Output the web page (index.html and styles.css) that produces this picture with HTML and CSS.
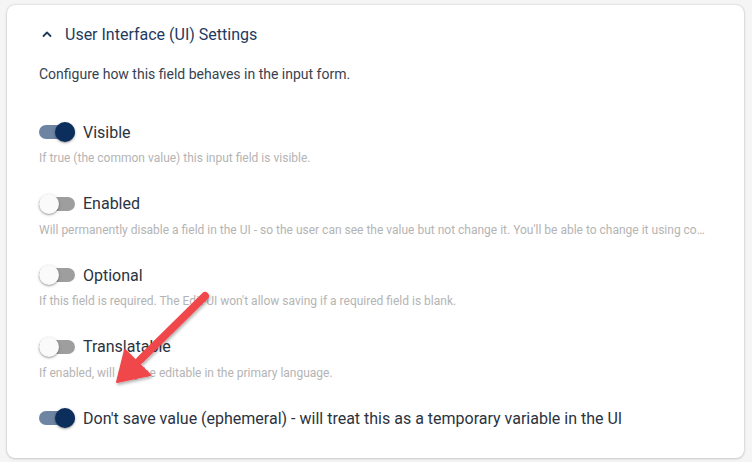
FILE: index.html
```html
<!DOCTYPE html>
<html>
<head>
<meta charset="utf-8">
<link rel="stylesheet" href="styles.css">
</head>
<body>
<div class="card">
  <div class="header">
    <svg class="chevron" width="12" height="12" viewBox="0 0 12 12"><path d="M2.5 8 L6 4.5 L9.5 8" fill="none" stroke="#1e3a5f" stroke-width="1.8" stroke-linecap="round" stroke-linejoin="round"/></svg>
    <span class="title">User Interface (UI) Settings</span>
  </div>
  <p class="intro">Configure how this field behaves in the input form.</p>
  <div class="items">
    <div class="item">
      <div class="row"><span class="toggle on"><span class="thumb"></span></span><span class="label">Visible</span></div>
      <div class="desc">If true (the common value) this input field is visible.</div>
    </div>
    <div class="item">
      <div class="row"><span class="toggle"><span class="thumb"></span></span><span class="label">Enabled</span></div>
      <div class="desc">Will permanently disable a field in the UI - so the user can see the value but not change it. You'll be able to change it using code and formulas.</div>
    </div>
    <div class="item">
      <div class="row"><span class="toggle"><span class="thumb"></span></span><span class="label">Optional</span></div>
      <div class="desc">If this field is required. The Edit-UI won't allow saving if a required field is blank.</div>
    </div>
    <div class="item">
      <div class="row"><span class="toggle"><span class="thumb"></span></span><span class="label">Translatable</span></div>
      <div class="desc">If enabled, will only be editable in the primary language.</div>
    </div>
    <div class="item">
      <div class="row"><span class="toggle on"><span class="thumb"></span></span><span class="label">Don't save value (ephemeral) - will treat this as a temporary variable in the UI</span></div>
    </div>
  </div>
</div>
<svg class="arrow" width="752" height="462" viewBox="0 0 752 462">
  <defs>
    <filter id="sh" x="-20%" y="-20%" width="140%" height="140%">
      <feDropShadow dx="1" dy="2" stdDeviation="1.5" flood-color="#000" flood-opacity="0.3"/>
    </filter>
  </defs>
  <g filter="url(#sh)" fill="#f0464b" stroke="#f0464b">
    <line x1="205" y1="296" x2="140" y2="360" stroke-width="8" stroke-linecap="round"/>
    <polygon points="117,382 125,350 150,375" stroke-width="2" stroke-linejoin="round"/>
  </g>
</svg>
</body>
</html>
```
FILE: styles.css
```css
html, body {
  margin: 0;
  padding: 0;
  background: #f5f5f5;
  font-family: Roboto, "Liberation Sans", sans-serif;
}
body {
  padding: 5px 8px 4px 7px;
  width: 752px;
  height: 462px;
  box-sizing: border-box;
  overflow: hidden;
}
.card {
  background: #fff;
  border-radius: 8px;
  box-shadow: 0 0 2px rgba(0,0,0,0.22), 0 1px 3px rgba(0,0,0,0.12);
  padding: 17px 38px 28px 32px;
  height: 453px;
  box-sizing: border-box;
}
.header {
  display: flex;
  align-items: center;
  height: 24px;
  padding-left: 2px;
}
.chevron {
  margin-right: 12px;
}
.title {
  font-size: 16px;
  color: #1e3a5f;
}
.intro {
  margin: 18px 0 0 0;
  font-size: 14px;
  line-height: 20px;
  color: #37424f;
}
.items {
  margin-top: 36px;
  display: flex;
  flex-direction: column;
  gap: 25.5px;
}
.item {
  display: flex;
  flex-direction: column;
  gap: 6px;
}
.row {
  display: flex;
  align-items: center;
  height: 24px;
}
.toggle {
  position: relative;
  width: 36px;
  height: 14px;
  border-radius: 7px;
  background: #9e9e9e;
  margin-right: 8px;
  flex: none;
}
.toggle .thumb {
  position: absolute;
  top: -3px;
  left: 0;
  width: 20px;
  height: 20px;
  border-radius: 50%;
  background: #fafafa;
  box-shadow: 0 1px 3px rgba(0,0,0,0.3), 0 1px 1px rgba(0,0,0,0.14);
}
.toggle.on {
  background: #6d84a2;
}
.toggle.on .thumb {
  left: 16px;
  background: #0b2e5c;
}
.label {
  font-size: 16px;
  color: #2b3340;
  white-space: nowrap;
}
.desc {
  font-size: 12px;
  line-height: 16px;
  color: #b4b4b4;
  white-space: nowrap;
  overflow: hidden;
  text-overflow: ellipsis;
}
.arrow {
  position: absolute;
  left: 0;
  top: 0;
  pointer-events: none;
}
```
